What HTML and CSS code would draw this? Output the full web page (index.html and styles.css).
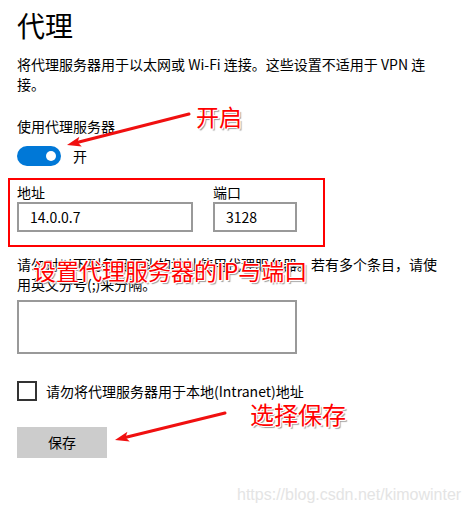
FILE: index.html
```html
<!DOCTYPE html>
<html lang="zh-CN">
<head>
<meta charset="utf-8">
<link rel="stylesheet" href="styles.css">
</head>
<body>
<div class="page">
  <h1 class="title">代理</h1>
  <p class="desc">将代理服务器用于以太网或 Wi-Fi 连接。这些设置不适用于 VPN 连接。</p>
  <div class="label use-label">使用代理服务器</div>
  <div class="toggle-row">
    <span class="toggle"><span class="knob"></span></span>
    <span class="toggle-text">开</span>
  </div>
  <div class="addr-box">
    <div class="field">
      <div class="label">地址</div>
      <div class="input addr">14.0.0.7</div>
    </div>
    <div class="field">
      <div class="label">端口</div>
      <div class="input port">3128</div>
    </div>
  </div>
  <p class="desc desc2">请勿对以下列条目开头的地址使用代理服务器。若有多个条目，请使用英文分号(;)来分隔。</p>
  <div class="textarea"></div>
  <div class="check-row">
    <span class="checkbox"></span>
    <span class="check-text">请勿将代理服务器用于本地(Intranet)地址</span>
  </div>
  <div class="save-btn">保存</div>
</div>

<div class="note note-on">开启</div>
<div class="note note-ip">设置代理服务器的IP与端口</div>
<div class="note note-save">选择保存</div>

<svg class="arrows" width="468" height="512" viewBox="0 0 468 512">
  <line x1="189" y1="114" x2="78" y2="142.2" stroke="#f01010" stroke-width="3" stroke-linecap="round"/>
  <polygon points="67,145 81.8,146.4 77.5,142.3 79.4,136.8" fill="#f01010"/>
  <line x1="225" y1="413" x2="126" y2="437.3" stroke="#f01010" stroke-width="3" stroke-linecap="round"/>
  <polygon points="115,440 129.8,441.6 125.5,437.4 127.4,431.8" fill="#f01010"/>
</svg>

<div class="watermark">https://blog.csdn.net/kimowinter</div>
</body>
</html>
```

FILE: styles.css
```css
html, body {
  margin: 0;
  padding: 0;
  background: #ffffff;
}
body {
  width: 468px;
  height: 512px;
  position: relative;
  overflow: hidden;
  font-family: "Noto Sans CJK SC", "Noto Sans", sans-serif;
  color: #000;
}
.page {
  padding-left: 17px;
  width: 423px;
  display: flex;
  flex-direction: column;
  align-items: flex-start;
}
.title {
  font-size: 28px;
  line-height: 40px;
  font-weight: 400;
  margin: 5px 0 0;
}
.desc {
  font-size: 14px;
  line-height: 20px;
  margin: 9px 0 0;
}
.label {
  font-size: 14px;
  line-height: 20px;
}
.use-label {
  margin-top: 22px;
}
.toggle-row {
  margin-top: 10px;
  display: flex;
  align-items: center;
  gap: 12px;
  height: 20px;
}
.toggle {
  width: 44px;
  height: 20px;
  border-radius: 10px;
  background: #0078d7;
  position: relative;
  display: block;
}
.knob {
  position: absolute;
  width: 10px;
  height: 10px;
  border-radius: 50%;
  background: #fff;
  right: 5px;
  top: 5px;
}
.toggle-text {
  font-size: 14px;
  line-height: 20px;
}
.addr-box {
  margin: 12px 0 0 -9px;
  width: 306px;
  border: 2px solid #ff0000;
  padding: 2px 0 13px 7px;
  display: flex;
  gap: 20px;
}
.input {
  box-sizing: border-box;
  height: 30px;
  border: 2px solid #999;
  font-size: 14px;
  line-height: 26px;
  padding-left: 11px;
}
.addr { width: 176px; }
.port { width: 84px; }
.desc2 {
  margin-top: 7px;
}
.textarea {
  box-sizing: border-box;
  margin-top: 6px;
  width: 280px;
  height: 54px;
  border: 2px solid #999;
}
.check-row {
  margin-top: 27px;
  display: flex;
  align-items: center;
  gap: 9px;
  height: 20px;
}
.checkbox {
  box-sizing: border-box;
  width: 20px;
  height: 20px;
  border: 2px solid #333;
  display: block;
}
.check-text {
  font-size: 14px;
  line-height: 20px;
}
.save-btn {
  margin-top: 26px;
  width: 90px;
  height: 31px;
  background: #cccccc;
  font-size: 14px;
  line-height: 31px;
  text-align: center;
}
.note {
  position: absolute;
  color: #ff0000;
  line-height: 1;
  white-space: nowrap;
  text-shadow: 1px 0 0 #fff, -1px 0 0 #fff, 0 1px 0 #fff, 0 -1px 0 #fff,
    1px 1px 0 #fff, -1px -1px 0 #fff, 2px 2px 1px #999;
}
.note-on {
  left: 196px;
  top: 105px;
  font-size: 23px;
}
.note-ip {
  left: 33px;
  top: 259px;
  font-size: 23px;
}
.note-save {
  left: 250px;
  top: 402px;
  font-size: 24px;
}
.arrows {
  position: absolute;
  left: 0;
  top: 0;
  pointer-events: none;
}
.watermark {
  position: absolute;
  left: 237px;
  top: 486px;
  font-family: "Liberation Sans", Arial, sans-serif;
  font-size: 16px;
  line-height: 18px;
  color: #e4e4e4;
}
```
